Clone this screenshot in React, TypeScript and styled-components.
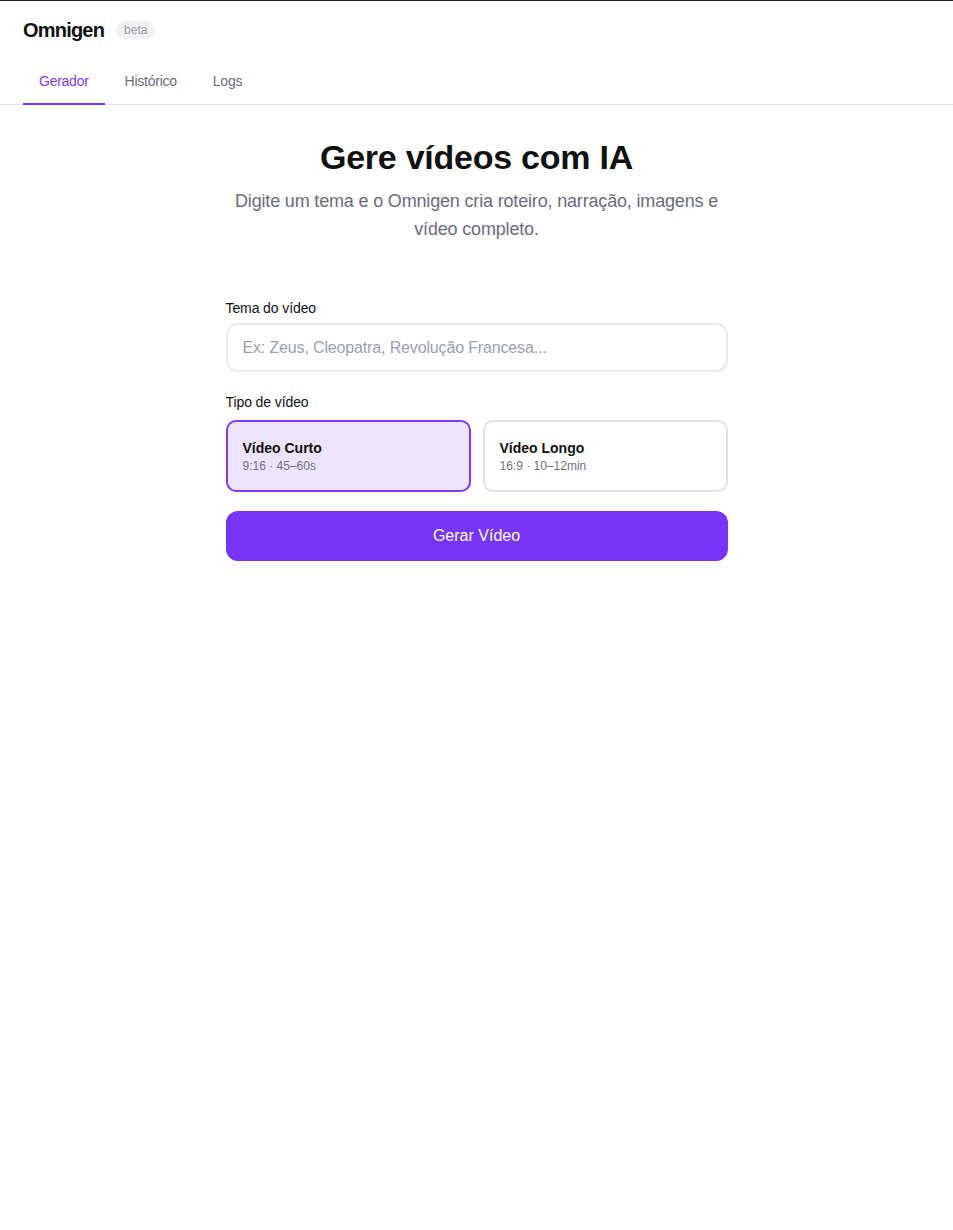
import React, { useState } from "react";
import styled, { createGlobalStyle } from "styled-components";

const Global = createGlobalStyle`
  html, body { margin: 0; padding: 0; background: #fff; }
  body { font-family: "Liberation Sans", Arial, sans-serif; color: #111; border-top: 1px solid #222; }
  * { box-sizing: border-box; }
`;

const Header = styled.header`
  border-bottom: 1px solid #e5e7eb;
  padding: 15px 23px 0;
`;

const BrandRow = styled.div`
  display: flex;
  align-items: center;
  gap: 12px;
  height: 28px;
`;

const Brand = styled.div`
  font-size: 20px;
  font-weight: 700;
  letter-spacing: -0.8px;
  color: #111;
`;

const Badge = styled.span`
  background: #f1f1f4;
  color: #9a9aa6;
  font-size: 12px;
  padding: 3px 8px;
  border-radius: 9px;
  line-height: 12px;
`;

const Tabs = styled.nav`
  display: flex;
  gap: 4px;
  margin-top: 15px;
`;

const Tab = styled.button<{ $active?: boolean }>`
  background: none;
  border: none;
  font-family: inherit;
  font-size: 14px;
  letter-spacing: -0.25px;
  line-height: 20px;
  padding: 12px 16px;
  color: ${(p) => (p.$active ? "#7a3cf0" : "#6b6b7b")};
  border-bottom: 2px solid ${(p) => (p.$active ? "#7a3cf0" : "transparent")};
  margin-bottom: -1px;
  cursor: pointer;
`;

const Main = styled.main`
  width: 502px;
  margin: 0 auto;
  padding-top: 32px;
  display: flex;
  flex-direction: column;
`;

const Title = styled.h1`
  margin: 0;
  font-size: 34px;
  line-height: 40px;
  font-weight: 700;
  text-align: center;
  letter-spacing: -0.25px;
  color: #111;
`;

const Subtitle = styled.p`
  margin: 10px 0 0;
  font-size: 18px;
  letter-spacing: -0.17px;
  line-height: 28px;
  color: #6b6b7b;
  text-align: center;
  padding: 0 2px;
`;

const Form = styled.div`
  margin-top: 55px;
  display: flex;
  flex-direction: column;
`;

const Label = styled.label`
  font-size: 14px;
  letter-spacing: -0.1px;
  line-height: 20px;
  color: #111;
`;

const Input = styled.input`
  margin-top: 5px;
  height: 49px;
  border: 2px solid #ebebef;
  border-radius: 12px;
  padding: 0 15px;
  font-family: inherit;
  font-size: 16px;
  letter-spacing: -0.15px;
  color: #111;
  outline: none;
  &::placeholder { color: #9aa0b0; }
`;

const Section = styled.div`
  margin-top: 20px;
  display: flex;
  flex-direction: column;
`;

const Options = styled.div`
  margin-top: 8px;
  display: grid;
  grid-template-columns: 1fr 1fr;
  gap: 12px;
`;

const Option = styled.button<{ $selected?: boolean }>`
  height: 72px;
  border-radius: 10px;
  border: 2px solid ${(p) => (p.$selected ? "#7a3cf0" : "#e2e2e8")};
  background: ${(p) => (p.$selected ? "#ebe4fb" : "#fff")};
  padding: 0 15px;
  display: flex;
  flex-direction: column;
  justify-content: center;
  align-items: flex-start;
  font-family: inherit;
  cursor: pointer;
  text-align: left;
`;

const OptionTitle = styled.span`
  font-size: 14px;
  font-weight: 700;
  line-height: 18px;
  color: #111;
`;

const OptionMeta = styled.span`
  font-size: 12px;
  line-height: 16px;
  color: #707080;
  margin-top: 1px;
`;

const Submit = styled.button`
  margin-top: 19px;
  height: 50px;
  border: none;
  border-radius: 12px;
  background: #7634f4;
  color: #fff;
  font-family: inherit;
  font-size: 16px;
  cursor: pointer;
`;

export default function App() {
  const [type, setType] = useState<"short" | "long">("short");
  return (
    <>
      <Global />
      <Header>
        <BrandRow>
          <Brand>Omnigen</Brand>
          <Badge>beta</Badge>
        </BrandRow>
        <Tabs>
          <Tab $active>Gerador</Tab>
          <Tab>Histórico</Tab>
          <Tab>Logs</Tab>
        </Tabs>
      </Header>
      <Main>
        <Title>Gere vídeos com IA</Title>
        <Subtitle>
          Digite um tema e o Omnigen cria roteiro, narração, imagens e vídeo completo.
        </Subtitle>
        <Form>
          <Label>Tema do vídeo</Label>
          <Input placeholder="Ex: Zeus, Cleopatra, Revolução Francesa..." />
          <Section>
            <Label>Tipo de vídeo</Label>
            <Options>
              <Option $selected={type === "short"} onClick={() => setType("short")}>
                <OptionTitle>Vídeo Curto</OptionTitle>
                <OptionMeta>9:16 · 45–60s</OptionMeta>
              </Option>
              <Option $selected={type === "long"} onClick={() => setType("long")}>
                <OptionTitle>Vídeo Longo</OptionTitle>
                <OptionMeta>16:9 · 10–12min</OptionMeta>
              </Option>
            </Options>
          </Section>
          <Submit>Gerar Vídeo</Submit>
        </Form>
      </Main>
    </>
  );
}
